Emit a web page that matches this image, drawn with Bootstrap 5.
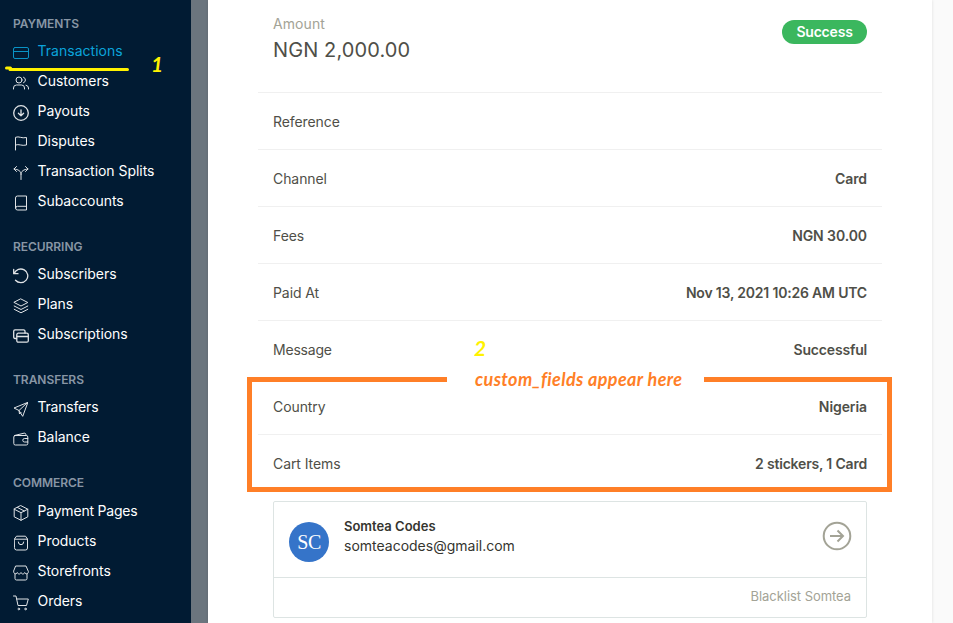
<!DOCTYPE html>
<html lang="en">
<head>
<meta charset="utf-8">
<meta name="viewport" content="width=device-width, initial-scale=1">
<title>Transaction details</title>
<link href="https://cdn.jsdelivr.net/npm/bootstrap@5.3.0/dist/css/bootstrap.min.css" rel="stylesheet">
<style>
body{font-family:Inter,"Liberation Sans",sans-serif;font-size:14px;line-height:20px;background:#fafafa;color:#4f4f48;height:623px;overflow:hidden}
.side{width:191px;background:#011b33;padding-top:12px}
.side-title{height:24px;margin-top:19px;padding-left:13px;font-size:12px;font-weight:600;color:#8896a5;letter-spacing:-.05px}
.side-title.first{margin-top:0}
.side-title.last{margin-bottom:1px}
.side .nav-link{height:30px;padding:0 0 0 13px;color:#fff;gap:8.5px;letter-spacing:-.04px}
.side .nav-link.active{color:#0ba4db;letter-spacing:.02px}
.side svg{width:16px;height:16px;margin-top:4px;fill:none;stroke:currentColor;stroke-width:1;stroke-linecap:round;stroke-linejoin:round;opacity:.88;flex:none}
.side .heavy{stroke-width:1.3}
.tight{letter-spacing:-.2px}
.gutter{width:17px;background:#6b757e}
.main-pane{width:724px;padding:0 50px;box-shadow:0 0 3px rgba(0,0,0,.12)}
.amount-head{height:93px;padding:14px 15px 0;border-bottom:1px solid #f0f0f0}
.amount-label{color:#a3a396;letter-spacing:.1px}
.amount-value{font-size:20px;line-height:32px;letter-spacing:.1px}
.pill{width:85px;height:24px;margin-top:6px;background:#3bb75e;font-size:14px;font-weight:600;line-height:23px;padding:0;letter-spacing:-.2px}
.detail-row{height:57px;padding:2px 15px 0;border-bottom:1px solid #f0f0f0;letter-spacing:-.08px}
.detail-row b{font-weight:600}
.detail-row .snug{letter-spacing:-.19px}
.detail-row.plain{border-bottom-color:transparent}
.person{margin:9px 15px 0;border:1px solid #dde4e3;border-radius:2px;height:117px}
.person-top{height:76px;padding:4px 14px 0 15px;border-bottom:1px solid #dde4e3;color:#35352f}
.avatar-dot{width:40px;height:40px;background:#3574c9;font-family:"Liberation Serif",serif;font-size:20px;letter-spacing:-.5px}
.person-copy{margin-left:15px;margin-bottom:12px}
.person-name{font-size:13px;font-weight:600}
.go{margin-bottom:12px}
.person-foot{height:36px;padding-right:15px;font-size:13px;color:#a3a396;letter-spacing:-.05px}
.note{font-family:Lato,sans-serif;font-weight:700;font-style:italic;white-space:nowrap}
.yellow{color:#fff200}
.note-one{left:151px;top:52px;font-size:21px;line-height:24px}
.note-two{left:474px;top:336px;font-size:21px;line-height:24px}
.note-text{left:475px;top:368px;font-size:18px;line-height:22px;letter-spacing:.38px;color:#ff7f27}
.marker{left:5px;top:65px;width:125px;height:7px}
.frame{left:247px;top:377px}
</style>
</head>
<body class="position-relative">
<div class="d-flex h-100">
  <nav class="side flex-shrink-0">
    <div class="side-title first d-flex align-items-center">PAYMENTS</div>
    <div class="nav flex-column">
      <a class="nav-link active d-flex align-items-center" href="#"><svg viewBox="0 0 16 16"><rect x=".5" y="2.5" width="15" height="11" rx="1.500"/><path d="M.5 6.500h15"/></svg><span>Transactions</span></a>
      <a class="nav-link d-flex align-items-center" href="#"><svg viewBox="0 0 16 16"><circle cx="6" cy="5" r="3"/><path d="M.5 14v-1a3 3 0 0 1 3-3h5a3 3 0 0 1 3 3v1M10.5 2.2a3 3 0 0 1 0 5.6M13 10.2a3 3 0 0 1 2.5 2.8v1"/></svg><span>Customers</span></a>
      <a class="nav-link d-flex align-items-center" href="#"><svg viewBox="0 0 16 16" class="heavy"><circle cx="8" cy="8" r="7.3"/><path d="M8 4.8v6M5.4 8.3L8 10.9l2.6-2.6"/></svg><span>Payouts</span></a>
      <a class="nav-link d-flex align-items-center" href="#"><svg viewBox="0 0 16 16"><path d="M2.5 15V2.3c3.500-1.500 6 1.500 11 .2v7.500c-5 1.300-7.500-1.500-11 0"/></svg><span>Disputes</span></a>
      <a class="nav-link d-flex align-items-center" href="#"><svg viewBox="0 0 16 16"><path d="M8 14.500V9.500C8 6 5.500 4.500 1 4M8 9.500C8 6 10.500 4.500 15 4M3.500 1.500L1 4l2.500 2.500M12.500 1.500L15 4l-2.500 2.500"/></svg><span>Transaction Splits</span></a>
      <a class="nav-link d-flex align-items-center" href="#"><svg viewBox="0 0 16 16"><path d="M2.500 13.200V3a2 2 0 0 1 2-2h9v14h-9a1.800 1.800 0 0 1 0-3.700h9"/></svg><span>Subaccounts</span></a>
    </div>
    <div class="side-title d-flex align-items-center">RECURRING</div>
    <div class="nav flex-column">
      <a class="nav-link d-flex align-items-center" href="#"><svg viewBox="0 0 16 16" class="heavy"><path d="M.7 1.500v4.200h4.300M1.200 5.500A7 6.800 0 1 1 2.500 12.300"/></svg><span>Subscribers</span></a>
      <a class="nav-link d-flex align-items-center" href="#"><svg viewBox="0 0 16 16"><path d="M8 1l6.800 3.500L8 8 1.200 4.500zM1.200 8L8 11.500 14.800 8M1.200 11.300L8 14.800l6.800-3.500"/></svg><span>Plans</span></a>
      <a class="nav-link d-flex align-items-center" href="#"><svg viewBox="0 0 16 16" class="heavy"><path d="M3.500 10.500H2A1.400 1.400 0 0 1 .7 9V3.200A1.400 1.400 0 0 1 2 1.800h8.500A1.400 1.400 0 0 1 12 3.200V5"/><rect x="3.800" y="5.200" width="11.500" height="9" rx="1.500"/><path d="M4 8.500h11"/></svg><span>Subscriptions</span></a>
    </div>
    <div class="side-title d-flex align-items-center">TRANSFERS</div>
    <div class="nav flex-column">
      <a class="nav-link d-flex align-items-center" href="#"><svg viewBox="0 0 16 16"><path d="M14.500 1.500L1 7l5 2.500L9.500 15zM14.500 1.500L6 9.500l.5 3.500L8 11.500"/></svg><span class="tight">Transfers</span></a>
      <a class="nav-link d-flex align-items-center" href="#"><svg viewBox="0 0 16 16"><path d="M1.500 4.500L11 2.200c1.500-.3 2 .5 2 2.300"/><rect x=".8" y="4.500" width="14" height="9.500" rx="1.500"/><path d="M14.800 7.500h-3.300a1.700 1.700 0 0 0 0 3.500h3.300"/></svg><span>Balance</span></a>
    </div>
    <div class="side-title last d-flex align-items-center">COMMERCE</div>
    <div class="nav flex-column">
      <a class="nav-link d-flex align-items-center" href="#"><svg viewBox="0 0 16 16"><path d="M8 .7l6.800 3.500v7.600L8 15.300l-6.800-3.500V4.200zM1.200 4.200L8 7.700l6.800-3.500M8 7.700v7.600M4.500 2.500l6.800 3.500"/></svg><span class="tight">Payment Pages</span></a>
      <a class="nav-link d-flex align-items-center" href="#"><svg viewBox="0 0 16 16"><path d="M1.500 4l2-2.800h9l2 2.800v9a2 2 0 0 1-2 2h-9a2 2 0 0 1-2-2zM1.500 4.200h13M5.300 7a2.700 2.700 0 0 0 5.400 0"/></svg><span>Products</span></a>
      <a class="nav-link d-flex align-items-center" href="#"><svg viewBox="0 0 16 16"><path d="M3 1h10l2.400 5.500c0 3-3.200 3-3.700 1-.7 2-3 2-3.700 0-.7 2-3 2-3.700 0-.5 2-3.700 2-3.700-1zM2 9v4.500A1.500 1.500 0 0 0 3.500 15h9a1.500 1.500 0 0 0 1.500-1.500V9"/></svg><span>Storefronts</span></a>
      <a class="nav-link d-flex align-items-center" href="#"><svg viewBox="0 0 16 16"><path d="M.5 1H3l2 9.500h8.500L15.300 4H3.700"/><circle cx="5.800" cy="14" r=".8"/><circle cx="12.500" cy="14" r=".8"/></svg><span>Orders</span></a>
    </div>
  </nav>
  <div class="gutter flex-shrink-0"></div>
  <main class="main-pane bg-white flex-shrink-0">
    <div class="amount-head d-flex justify-content-between">
      <div><div class="amount-label">Amount</div><div class="amount-value">NGN 2,000.00</div></div>
      <span class="pill badge rounded-pill">Success</span>
    </div>
    <div>
      <div class="detail-row d-flex align-items-center justify-content-between"><span>Reference</span></div>
      <div class="detail-row d-flex align-items-center justify-content-between"><span>Channel</span><b>Card</b></div>
      <div class="detail-row d-flex align-items-center justify-content-between"><span>Fees</span><b>NGN 30.00</b></div>
      <div class="detail-row d-flex align-items-center justify-content-between"><span>Paid At</span><b class="snug">Nov 13, 2021 10:26 AM UTC</b></div>
      <div class="detail-row plain d-flex align-items-center justify-content-between"><span class="tight">Message</span><b class="snug">Successful</b></div>
      <div class="detail-row d-flex align-items-center justify-content-between"><span>Country</span><b>Nigeria</b></div>
      <div class="detail-row plain d-flex align-items-center justify-content-between"><span>Cart Items</span><b class="snug">2 stickers, 1 Card</b></div>
    </div>
    <div class="person">
      <div class="person-top d-flex align-items-center">
        <div class="avatar-dot rounded-circle text-white d-flex align-items-center justify-content-center">SC</div>
        <div class="flex-grow-1 person-copy"><div class="person-name">Somtea Codes</div><div>somteacodes@gmail.com</div></div>
        <svg class="go" width="30" height="30" viewBox="0 0 30 30" fill="none" stroke="#a3a396" stroke-width="2"><circle cx="15" cy="15" r="13.300"/><path d="M8 15h13M15.500 9.500L21 15l-5.500 5.500"/></svg>
      </div>
      <div class="person-foot d-flex align-items-center justify-content-end"><span>Blacklist Somtea</span></div>
    </div>
  </main>
</div>
<svg class="marker position-absolute" viewBox="0 0 125 7" fill="none" stroke="#fff200" stroke-width="3" stroke-linecap="round"><path d="M1.500 3h4M5 4.500h117.500"/></svg>
<div class="note yellow note-one position-absolute">1</div>
<div class="note yellow note-two position-absolute">2</div>
<svg class="frame position-absolute" width="645" height="115" viewBox="0 0 645 115" fill="none" stroke="#ff7f27" stroke-width="5"><path d="M200 2.500H2.500v110h640V2.500H457"/></svg>
<div class="note note-text position-absolute">custom_fields appear here</div>
<script src="https://cdn.jsdelivr.net/npm/bootstrap@5.3.0/dist/js/bootstrap.bundle.min.js"></script>
</body>
</html>
